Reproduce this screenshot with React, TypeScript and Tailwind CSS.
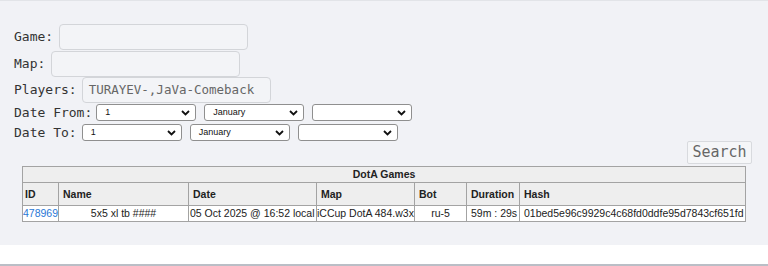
const mono = "font-['DejaVu_Sans_Mono',monospace]";

const Chevron = () => (
  <svg
    width="9"
    height="6"
    viewBox="0 0 9 6"
    className="absolute right-[5px] top-1/2 -translate-y-1/2 pointer-events-none"
  >
    <polyline points="1,1 4.5,4.5 8,1" fill="none" stroke="#111" strokeWidth="1.8" />
  </svg>
);

const FakeSelect = ({ value }: { value: string }) => (
  <div className="relative w-[100px] h-[17px] bg-white border border-[#8f8f8f] rounded-[3px] flex items-center pl-[8px] text-[9px] leading-none text-[#111] font-['Liberation_Sans',Arial,sans-serif]">
    {value}
    <Chevron />
  </div>
);

const TextInput = ({ value, className = "" }: { value?: string; className?: string }) => (
  <div
    className={`w-[189px] h-[26px] border border-[#d3d5d9] rounded-[4px] bg-[#f3f4f7] flex items-center pl-[6px] text-[12.5px] text-[#666] ${className}`}
  >
    {value}
  </div>
);

const games = [
  {
    id: "478969",
    name: "5x5 xl tb ####",
    date: "05 Oct 2025 @ 16:52 local",
    map: "iCCup DotA 484.w3x",
    bot: "ru-5",
    duration: "59m : 29s",
    hash: "01bed5e96c9929c4c68fd0ddfe95d7843cf651fd",
  },
];

export default function App() {
  return (
    <div className="w-full">
      <div className="bg-[#f1f2f6] border-t border-[#e2e4e8] pt-[23px] pb-[23px]">
        <div className={`pl-[14px] flex flex-col text-[13px] text-[#333] ${mono}`}>
          <div className="flex items-center h-[26px]">
            <span>Game:</span>
            <TextInput className="ml-[6px]" />
          </div>
          <div className="flex items-center h-[26px] mt-px">
            <span>Map:</span>
            <TextInput className="ml-[6px]" />
          </div>
          <div className="flex items-center h-[26px]">
            <span>Players:</span>
            <TextInput className="ml-[5px]" value="TURAYEV-,JaVa-Comeback" />
          </div>
          <div className="flex items-center h-[17px] mt-[1px]">
            <span>Date From:</span>
            <div className="flex gap-2 ml-[4px]">
              <FakeSelect value="1" />
              <FakeSelect value="January" />
              <FakeSelect value="" />
            </div>
          </div>
          <div className="flex items-center h-[17px] mt-[3px]">
            <span>Date To:</span>
            <div className="flex gap-2 ml-[5px]">
              <FakeSelect value="1" />
              <FakeSelect value="January" />
              <FakeSelect value="" />
            </div>
          </div>
        </div>

        <div className="flex justify-end pr-[16px]">
          <button
            className={`w-[65px] h-[23px] border border-[#d8dade] rounded-[2px] bg-[#f5f6f8] text-[15px] text-[#666] leading-none ${mono}`}
          >
            Search
          </button>
        </div>

        <table className="ml-[22px] mt-[2px] w-[723px] table-fixed border-collapse border border-[#a3a3a3] text-[10.5px] text-[#222] font-['Liberation_Sans',Arial,sans-serif]">
          <colgroup>
            <col className="w-[36px]" />
            <col className="w-[130px]" />
            <col className="w-[128px]" />
            <col className="w-[98px]" />
            <col className="w-[52px]" />
            <col className="w-[53px]" />
            <col className="w-[226px]" />
          </colgroup>
          <thead>
            <tr className="bg-[#eeeeee]">
              <th colSpan={7} className="border border-[#a3a3a3] text-center font-bold leading-[15px] p-0">
                DotA Games
              </th>
            </tr>
            <tr className="bg-[#eeeeee]">
              {["ID", "Name", "Date", "Map", "Bot", "Duration", "Hash"].map((h, i) => (
                <th
                  key={h}
                  className={`border border-[#a3a3a3] text-left font-bold leading-[14px] py-[4px] ${i === 0 ? "px-[2px]" : "px-[4px]"}`}
                >
                  {h}
                </th>
              ))}
            </tr>
          </thead>
          <tbody>
            {games.map((g) => (
              <tr key={g.id} className="bg-white leading-[15px]">
                <td className="border border-[#a3a3a3] p-0 whitespace-nowrap overflow-hidden">
                  <a className="text-[#2a78d6]">{g.id}</a>
                </td>
                <td className="border border-[#a3a3a3] p-0 text-center whitespace-nowrap">{g.name}</td>
                <td className="border border-[#a3a3a3] py-0 px-[1px] whitespace-nowrap overflow-hidden">{g.date}</td>
                <td className="border border-[#a3a3a3] p-0 whitespace-nowrap overflow-hidden">{g.map}</td>
                <td className="border border-[#a3a3a3] p-0 text-center whitespace-nowrap">{g.bot}</td>
                <td className="border border-[#a3a3a3] py-0 px-[4px] whitespace-nowrap overflow-hidden">{g.duration}</td>
                <td className="border border-[#a3a3a3] py-0 px-[4px] whitespace-nowrap overflow-hidden">{g.hash}</td>
              </tr>
            ))}
          </tbody>
        </table>
      </div>
      <div className="h-[19px] bg-white" />
      <div className="h-[3px] bg-[#babec6]" />
    </div>
  );
}
